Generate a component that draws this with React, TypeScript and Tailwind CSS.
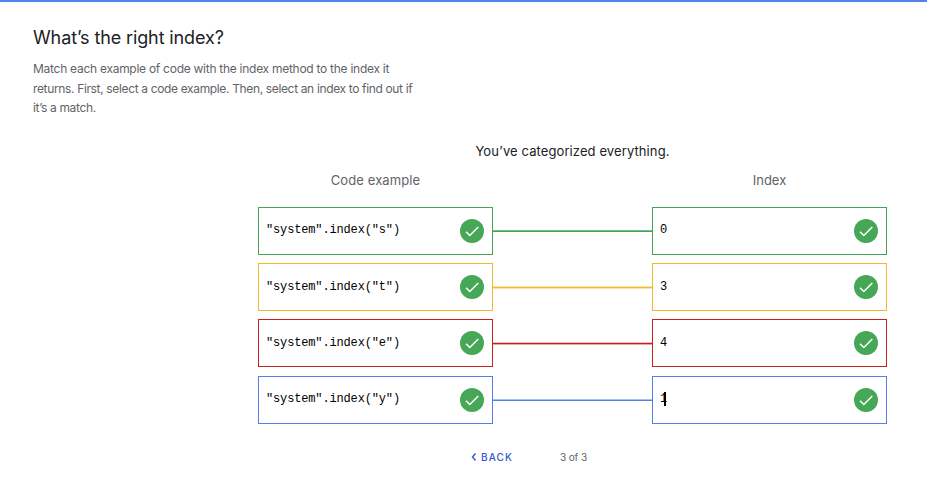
type Pair = {
  code: string;
  index: string;
  border: string;
  line: string;
  gap: string;
  inset: string;
  active?: boolean;
};

const pairs: Pair[] = [
  { code: '"system".index("s")', index: '0', border: 'border-[#45a554]', line: 'h-0.5 border-t-[#7dbd87] border-b-[#45a554]', gap: 'mb-2', inset: 'pb-0.5' },
  { code: '"system".index("t")', index: '3', border: 'border-[#f3b92b]', line: 'mt-px h-[3px] border-t-[#fbe3a7] border-b-[#fbe3a7] bg-[#f3b92b]', gap: 'mb-2', inset: '' },
  { code: '"system".index("e")', index: '4', border: 'border-[#c5221f]', line: 'mt-px h-[3px] border-t-[#f0bfbe] border-b-[#e8a5a3] bg-[#c5221f]', gap: 'mb-[9px]', inset: '' },
  { code: '"system".index("y")', index: '1', border: 'border-[#5080e8]', line: 'h-0.5 border-t-[#a7c1f8] border-b-[#5080e8]', gap: '', inset: 'pb-0.5', active: true },
];

function Check() {
  return (
    <svg className="h-6 w-6 shrink-0" viewBox="0 0 24 24" fill="none">
      <circle cx="12" cy="12" r="12" fill="#46a757" />
      <path d="M6 12.7l3.8 3.8L18.3 8" stroke="#fff" strokeWidth="1.5" />
    </svg>
  );
}

function Box({ text, border, inset, active }: { text: string; border: string; inset: string; active?: boolean }) {
  return (
    <div className={`flex h-12 w-[235px] items-center justify-between border pr-2 pl-[7px] ${border}`}>
      <span className={`flex items-center font-['Liberation_Mono',monospace] text-[12px] leading-[14px] tracking-[-0.15px] text-black ${inset}`}>
        {text}
        {active && <span className="-ml-[3px] h-[14px] w-0.5 bg-black" />}
      </span>
      <Check />
    </div>
  );
}

export default function App() {
  return (
    <main className="h-[503px] w-[927px] overflow-hidden border-t-2 border-[#5283ed] bg-white font-['Inter',sans-serif] text-[#5f6368]">
      <header className="pt-[23px] pl-[33px]">
        <h1 className="h-[26px] text-[18px] leading-[26px] tracking-[-0.12px] whitespace-nowrap text-[#202124]">What’s the right index?</h1>
        <p className="mt-[8px] h-[58px] text-[12px] whitespace-nowrap">
          <span className="block h-5 leading-5 tracking-[-0.27px]">Match each example of code with the index method to the index it</span>
          <span className="block h-[19px] leading-[19px] tracking-[-0.35px]">returns. First, select a code example. Then, select an index to find out if</span>
          <span className="block h-[19px] leading-[19px] tracking-[-0.35px]">it’s a match.</span>
        </p>
      </header>

      <section className="ml-[258px] w-[629px]">
        <p className="mt-[24px] h-5 text-center text-[13px] leading-5 tracking-[0.1px] text-[#202124]">You’ve categorized everything.</p>
        <div className="mt-[9px] flex h-5 justify-between text-center text-[13px] leading-5">
          <h2 className="w-[235px] tracking-[0.1px]">Code example</h2>
          <h2 className="w-[235px]">Index</h2>
        </div>
        <div className="mt-[17px]">
          {pairs.map((pair) => (
            <div key={pair.code} className={`flex items-center ${pair.gap}`}>
              <Box text={pair.code} border={pair.border} inset={pair.inset} />
              <div className={`flex-1 border-t border-b ${pair.line}`} />
              <Box text={pair.index} border={pair.border} inset={pair.inset} active={pair.active} />
            </div>
          ))}
        </div>
      </section>

      <nav className="mt-[25px] ml-[471px] flex h-4 items-center text-[10px] leading-4">
        <button className="flex items-center font-medium tracking-[1.1px] text-[#3458c9]">
          <svg className="mr-[4px] h-2 w-[6px]" viewBox="0 0 6 8" fill="none" stroke="currentColor" strokeWidth="1.4">
            <path d="M4.5.5L1.5 4l3 3.5" />
          </svg>
          BACK
        </button>
        <span className="ml-[47px] tracking-[-0.1px]">3 of 3</span>
      </nav>
    </main>
  );
}
